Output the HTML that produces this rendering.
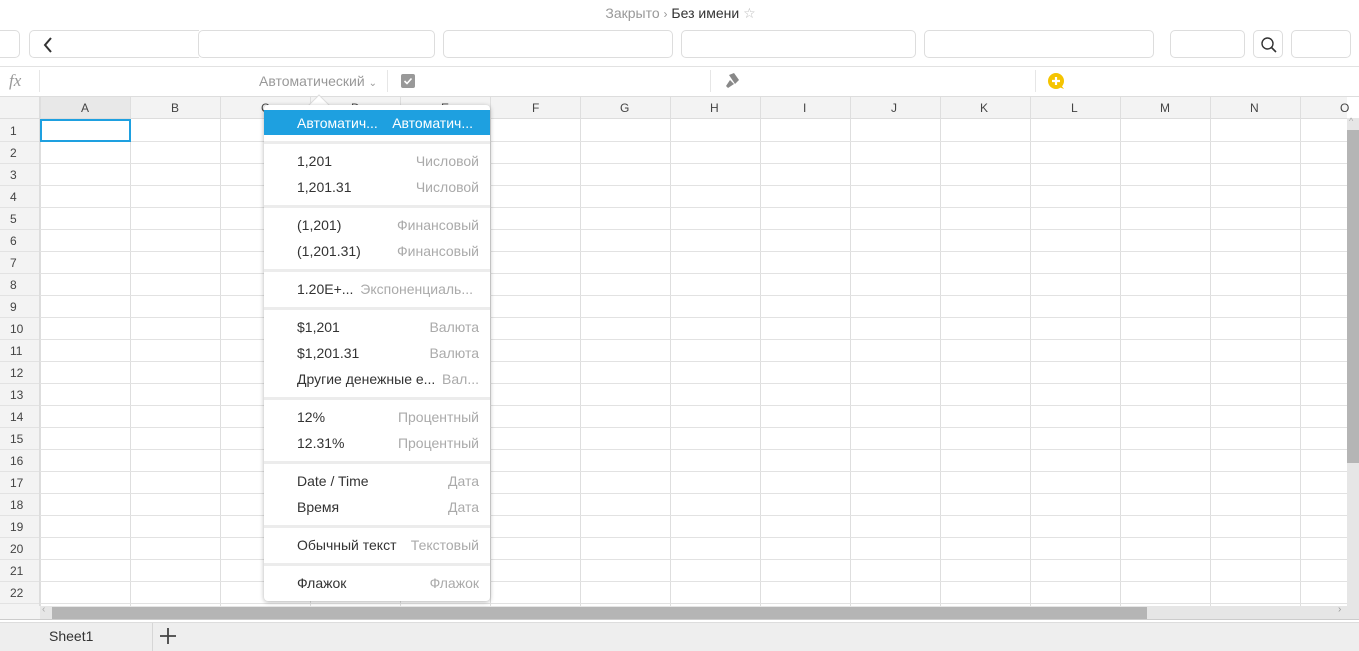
<!DOCTYPE html>
<html><head><meta charset="utf-8"><style>
*{box-sizing:border-box;margin:0;padding:0}
body{width:1359px;height:651px;overflow:hidden;background:#fff;font-family:"Liberation Sans","DejaVu Sans",sans-serif;position:relative;color:#333}
.abs{position:absolute}
.btn{position:absolute;top:30px;height:28px;border:1px solid #ddd;border-radius:5px;background:#fff}
.menu{position:absolute;left:264px;top:105px;width:226px;height:496px;background:#fff;border-radius:4px;box-shadow:0 1px 5px rgba(0,0,0,.3)}
.it{position:absolute;left:0;width:226px;height:26px;font-size:14px;line-height:26px}
.it .l{position:absolute;left:33px;color:#333}
.it .r{position:absolute;right:11px;color:#aaa}
.sep{position:absolute;left:0;width:226px;height:3px;background:#ececec}
</style></head><body>
<div class="abs" style="left:0;top:5px;width:1359px;text-align:center;font-size:14px;color:#999;line-height:16px"><span style="margin-left:2px">Закрыто <span style="font-size:12px">&#8250;</span> <span style="color:#333">Без имени</span> <span style="color:#bbb">☆</span></span></div>
<div class="btn" style="left:-6px;width:26px"></div>
<div class="btn" style="left:29px;width:170px;border-right:none;border-radius:5px 0 0 5px"><svg class="abs" style="left:12px;top:6px" width="12" height="16"><path d="M9 1 L3 8 L9 15" stroke="#333" stroke-width="2" fill="none"/></svg></div>
<div class="btn" style="left:198px;width:237px"></div>
<div class="btn" style="left:443px;width:230px"></div>
<div class="btn" style="left:681px;width:235px"></div>
<div class="btn" style="left:924px;width:230px"></div>
<div class="btn" style="left:1170px;width:75px"></div>
<div class="btn" style="left:1253px;width:30px"><svg class="abs" style="left:6px;top:5px" width="18" height="18"><circle cx="7.5" cy="7.5" r="5.5" stroke="#333" stroke-width="1.4" fill="none"/><path d="M11.5 11.5 L16 16" stroke="#333" stroke-width="1.6"/></svg></div>
<div class="btn" style="left:1291px;width:60px"></div>
<div class="abs" style="left:0;top:66px;width:1359px;height:1px;background:#e2e2e2"></div>
<div class="abs" style="left:9px;top:71px;font-family:'Liberation Serif',serif;font-style:italic;font-size:17px;color:#999">fx</div>
<div class="abs" style="left:39px;top:70px;width:1px;height:22px;background:#e6e6e6"></div>
<div class="abs" style="left:259px;top:73px;font-size:14px;color:#999">Автоматический <span style="font-size:10px">⌄</span></div>
<div class="abs" style="left:387px;top:70px;width:1px;height:22px;background:#e6e6e6"></div>
<div class="abs" style="left:401px;top:74px;width:14px;height:14px;background:#999;border-radius:2px"><svg width="14" height="14"><path d="M3.5 7 L6 9.5 L10.5 4.5" stroke="#fff" stroke-width="1.6" fill="none"/></svg></div>
<div class="abs" style="left:710px;top:70px;width:1px;height:22px;background:#e6e6e6"></div>
<svg class="abs" style="left:723px;top:72px" width="18" height="18"><path d="M6 3 L11 1 L16 8 L12 12 Z" fill="#888"/><path d="M7 8 L11 12 L5 16 L3 14 Z" fill="#888"/></svg>
<div class="abs" style="left:1035px;top:70px;width:1px;height:22px;background:#e6e6e6"></div>
<svg class="abs" style="left:1047px;top:72px" width="19" height="19"><path d="M14 13 L17 17 L12 15Z" fill="#f5c400"/><circle cx="9" cy="9" r="8" fill="#f5c400"/><path d="M9 5 V13 M5 9 H13" stroke="#fff" stroke-width="2.2"/></svg>
<div class="abs" style="left:0;top:96px;width:1359px;height:1px;background:#ddd"></div>
<!-- grid -->
<div class="abs" style="left:0;top:97px;width:1347px;height:22px;background:#f3f3f3;border-bottom:1px solid #ddd"></div>
<div class="abs" style="left:40px;top:97px;width:90px;height:22px;background:#e8e8e8;border-bottom:1px solid #ddd"></div>
<div class="abs" style="left:0;top:119px;width:40px;height:487px;background:#f3f3f3"></div>
<div class="abs" style="left:40px;top:97px;width:1307px;height:509px;background-image:linear-gradient(90deg,#dedede 1px,transparent 1px);background-size:90px 100%;background-position:0 0"></div>
<div class="abs" style="left:0;top:120px;width:1347px;height:486px;background-image:linear-gradient(180deg,transparent 21px,#e2e2e2 21px);background-size:100% 22px"></div>
<div class="abs" style="left:39px;top:97px;width:1px;height:509px;background:#ddd"></div>
<div class="abs" style="left:40px;top:98px;font-size:12px;color:#444;line-height:20px;white-space:nowrap">
<span style="position:absolute;left:41px">A</span><span style="position:absolute;left:131px">B</span><span style="position:absolute;left:221px">C</span><span style="position:absolute;left:311px">D</span><span style="position:absolute;left:401px">E</span><span style="position:absolute;left:492px">F</span><span style="position:absolute;left:580px">G</span><span style="position:absolute;left:670px">H</span><span style="position:absolute;left:763px">I</span><span style="position:absolute;left:851px">J</span><span style="position:absolute;left:940px">K</span><span style="position:absolute;left:1031px">L</span><span style="position:absolute;left:1120px">M</span><span style="position:absolute;left:1210px">N</span><span style="position:absolute;left:1300px">O</span></div>
<div class="abs" style="left:0;top:120px;width:40px;font-size:12px;color:#444;line-height:22px;text-align:left;padding-left:10px">1<br>2<br>3<br>4<br>5<br>6<br>7<br>8<br>9<br>10<br>11<br>12<br>13<br>14<br>15<br>16<br>17<br>18<br>19<br>20<br>21<br>22</div>
<div class="abs" style="left:40px;top:119px;width:91px;height:23px;border:2px solid #1ea0e0"></div>
<!-- scrollbars -->
<div class="abs" style="left:1347px;top:118px;width:12px;height:488px;background:#e6e6e6"></div>
<div class="abs" style="left:1347px;top:130px;width:12px;height:333px;background:#b5b5b5"></div>
<div class="abs" style="left:1349px;top:116px;font-size:9px;color:#aaa">^</div>
<div class="abs" style="left:0;top:606px;width:1359px;height:13px;background:#e6e6e6"></div>
<div class="abs" style="left:0;top:606px;width:40px;height:13px;background:#f3f3f3"></div>
<div class="abs" style="left:52px;top:607px;width:1095px;height:12px;background:#b5b5b5"></div>
<div class="abs" style="left:42px;top:604px;font-size:10px;color:#aaa">‹</div>
<div class="abs" style="left:1338px;top:604px;font-size:10px;color:#999">›</div>
<div class="abs" style="left:0;top:619px;width:1359px;height:1px;background:#ccc"></div>
<div class="abs" style="left:0;top:622px;width:1359px;height:29px;background:#eee;border-top:1px solid #ddd"></div>
<div class="abs" style="left:152px;top:623px;width:1px;height:28px;background:#d6d6d6"></div>
<div class="abs" style="left:49px;top:628px;font-size:14px;color:#333">Sheet1</div>
<svg class="abs" style="left:159px;top:627px" width="18" height="18"><path d="M9 1V17M1 9H17" stroke="#444" stroke-width="1.8"/></svg>
<!-- menu -->
<svg class="abs" style="left:308px;top:94px" width="22" height="12"><path d="M0 12 L11 1 L22 12Z" fill="#fff" stroke="#ddd"/></svg>
<div class="menu">
<div class="it" style="top:5px;background:#1ea0e0;height:25px"><span class="l" style="color:#fff">Автоматич...</span><span class="r" style="color:#fff;right:17px">Автоматич...</span></div>
<div class="sep" style="top:36px"></div>
<div class="it" style="top:43px"><span class="l">1,201</span><span class="r">Числовой</span></div>
<div class="it" style="top:69px"><span class="l">1,201.31</span><span class="r">Числовой</span></div>
<div class="sep" style="top:100px"></div>
<div class="it" style="top:107px"><span class="l">(1,201)</span><span class="r">Финансовый</span></div>
<div class="it" style="top:133px"><span class="l">(1,201.31)</span><span class="r">Финансовый</span></div>
<div class="sep" style="top:164px"></div>
<div class="it" style="top:171px"><span class="l">1.20E+...</span><span class="r" style="right:17px">Экспоненциаль...</span></div>
<div class="sep" style="top:202px"></div>
<div class="it" style="top:209px"><span class="l">$1,201</span><span class="r">Валюта</span></div>
<div class="it" style="top:235px"><span class="l">$1,201.31</span><span class="r">Валюта</span></div>
<div class="it" style="top:261px"><span class="l">Другие денежные е...</span><span class="r">Вал...</span></div>
<div class="sep" style="top:292px"></div>
<div class="it" style="top:299px"><span class="l">12%</span><span class="r">Процентный</span></div>
<div class="it" style="top:325px"><span class="l">12.31%</span><span class="r">Процентный</span></div>
<div class="sep" style="top:356px"></div>
<div class="it" style="top:363px"><span class="l">Date / Time</span><span class="r">Дата</span></div>
<div class="it" style="top:389px"><span class="l">Время</span><span class="r">Дата</span></div>
<div class="sep" style="top:420px"></div>
<div class="it" style="top:427px"><span class="l">Обычный текст</span><span class="r">Текстовый</span></div>
<div class="sep" style="top:458px"></div>
<div class="it" style="top:465px"><span class="l">Флажок</span><span class="r">Флажок</span></div>
</div>
</body></html>
